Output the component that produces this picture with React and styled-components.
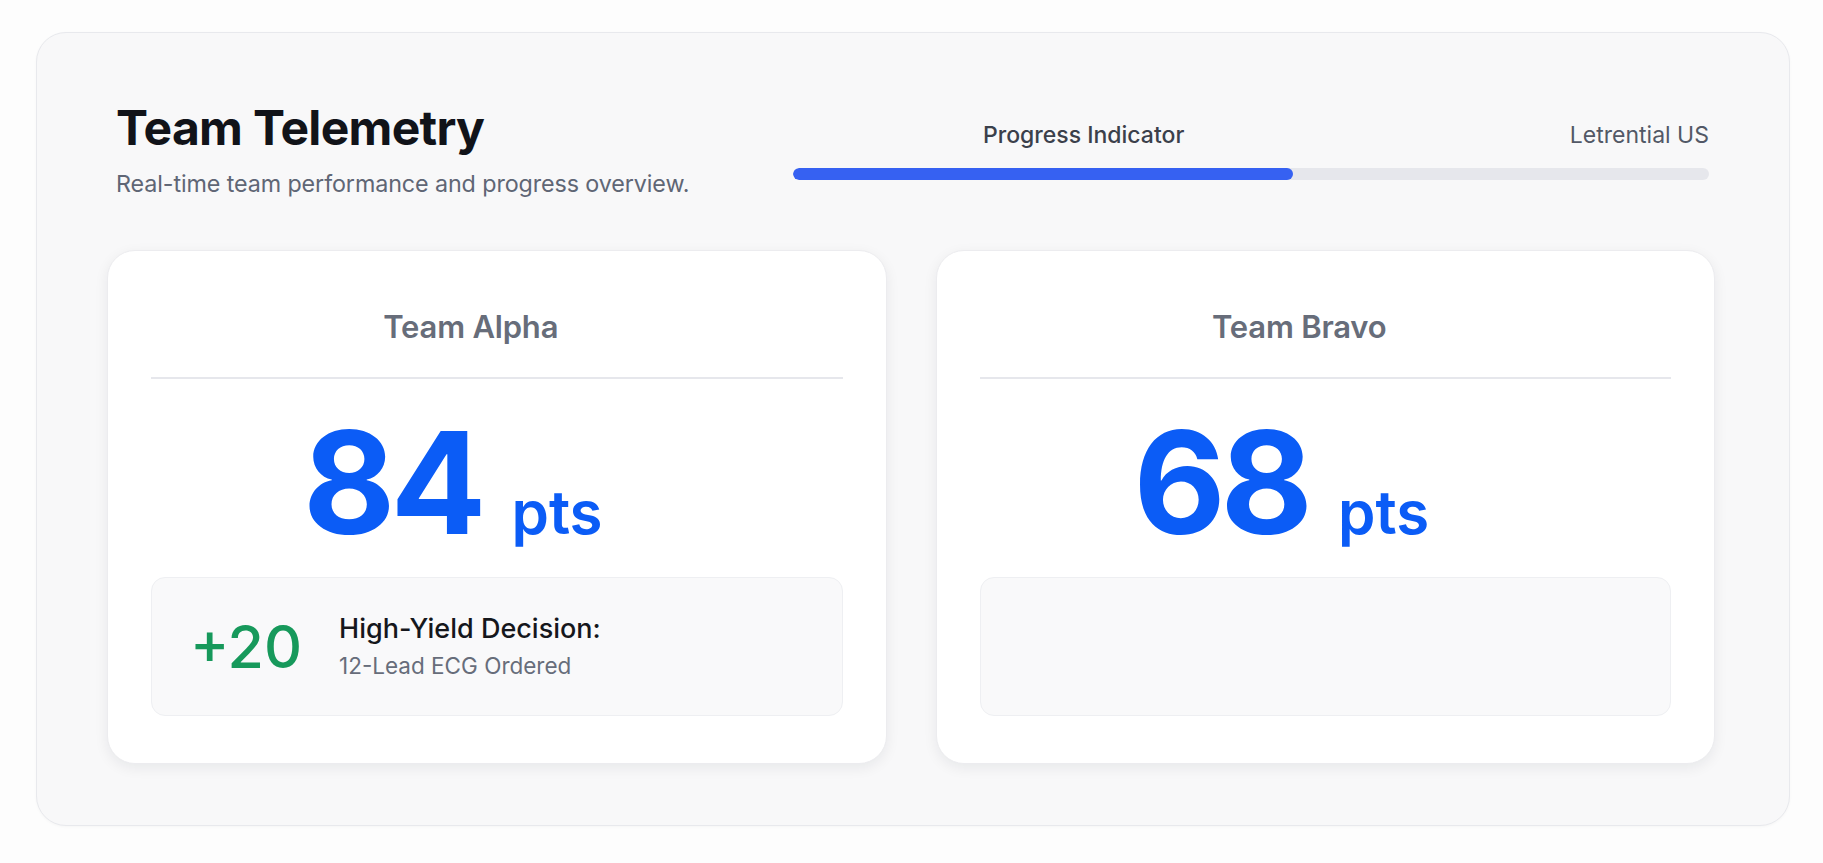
import React from 'react';
import styled, { createGlobalStyle } from 'styled-components';

const GlobalStyle = createGlobalStyle`
  * { box-sizing: border-box; }
  body {
    margin: 0;
    background: #fdfdfd;
    font-family: Inter, "Noto Sans", "Liberation Sans", sans-serif;
    color: #111827;
  }
`;

const Page = styled.div`
  padding: 32px 33px 38px 36px;
`;

const Panel = styled.section`
  background: #f8f8f9;
  border: 1px solid #e8e9ed;
  border-radius: 30px;
  padding: 66px 74px 61px 70px;
  box-shadow: 0 1px 3px rgba(17, 24, 39, 0.03);
`;

const Header = styled.header`
  display: flex;
  justify-content: space-between;
  align-items: flex-start;
  padding: 0 6px 0 9px;
  margin-bottom: 51px;
`;

const TitleBlock = styled.div`
  display: flex;
  flex-direction: column;
`;

const Title = styled.h1`
  margin: 0;
  font-size: 48px;
  line-height: 1.2;
  font-weight: 700;
  letter-spacing: -0.7px;
  color: #111319;
`;

const Subtitle = styled.p`
  margin: 12px 0 0;
  font-size: 23.3px;
  line-height: 1.3;
  letter-spacing: -0.1px;
  color: #5f6675;
`;

const Progress = styled.div`
  width: 916px;
  padding-top: 22px;
`;

const ProgressLabels = styled.div`
  display: flex;
  justify-content: space-between;
  padding-left: 190px;
  margin-bottom: 17px;
  font-size: 23px;
  line-height: 1.3;
`;

const Label = styled.span`
  color: ${p => (p.$strong ? '#3b404b' : '#525866')};
  font-weight: ${p => (p.$strong ? 500 : 400)};
`;

const Track = styled.div`
  height: 12px;
  border-radius: 6px;
  background: #e6e7ec;
  overflow: hidden;
`;

const Fill = styled.div`
  height: 100%;
  border-radius: 6px;
  background: #3661f2;
`;

const Cards = styled.div`
  display: grid;
  grid-template-columns: 1fr 1fr;
  gap: 49px;
`;

const Card = styled.article`
  background: #ffffff;
  border: 1px solid #ececef;
  border-radius: 28px;
  padding: 57px 43px 47px;
  box-shadow: 0 4px 14px rgba(17, 24, 39, 0.07);
`;

const TeamName = styled.h2`
  margin: 0;
  padding: 0 52px 32px 0;
  border-bottom: 2px solid #e6e7ec;
  text-align: center;
  font-size: 31px;
  line-height: 1.2;
  font-weight: 600;
  letter-spacing: -0.2px;
  color: #676d7a;
`;

const Score = styled.div`
  display: flex;
  justify-content: center;
  align-items: baseline;
  gap: 30px;
  margin: 32px 0 24px;
  padding-right: 88px;
  color: #0b5cf6;
`;

const Points = styled.span`
  font-size: 142px;
  line-height: 1;
  font-weight: 700;
  letter-spacing: -5px;
`;

const Unit = styled.span`
  font-size: 60px;
  line-height: 1;
  font-weight: 600;
`;

const Event = styled.div`
  display: flex;
  align-items: center;
  gap: 37px;
  height: 139px;
  padding: 0 38px;
  background: #f9f9fa;
  border: 1px solid #eeeff2;
  border-radius: 14px;
`;

const Delta = styled.span`
  font-size: 59px;
  line-height: 1;
  font-weight: 500;
  color: #17995b;
`;

const EventText = styled.div`
  display: flex;
  flex-direction: column;
  gap: 5px;
`;

const EventTitle = styled.span`
  font-size: 27px;
  line-height: 1.2;
  font-weight: 500;
  color: #15171c;
`;

const EventDetail = styled.span`
  font-size: 22.5px;
  line-height: 1.3;
  color: #676d7a;
`;

const teams = [
  { name: 'Team Alpha', points: 84, event: { delta: '+20', title: 'High-Yield Decision:', detail: '12-Lead ECG Ordered' } },
  { name: 'Team Bravo', points: 68, event: null },
];

export default function App() {
  const progress = 54.6;

  return (
    <>
      <GlobalStyle />
      <Page>
        <Panel>
          <Header>
            <TitleBlock>
              <Title>Team Telemetry</Title>
              <Subtitle>Real-time team performance and progress overview.</Subtitle>
            </TitleBlock>
            <Progress>
              <ProgressLabels>
                <Label $strong>Progress Indicator</Label>
                <Label>Letrential US</Label>
              </ProgressLabels>
              <Track>
                <Fill style={{ width: `${progress}%` }} />
              </Track>
            </Progress>
          </Header>

          <Cards>
            {teams.map(team => (
              <Card key={team.name}>
                <TeamName>{team.name}</TeamName>
                <Score>
                  <Points>{team.points}</Points>
                  <Unit>pts</Unit>
                </Score>
                <Event>
                  {team.event && (
                    <>
                      <Delta>{team.event.delta}</Delta>
                      <EventText>
                        <EventTitle>{team.event.title}</EventTitle>
                        <EventDetail>{team.event.detail}</EventDetail>
                      </EventText>
                    </>
                  )}
                </Event>
              </Card>
            ))}
          </Cards>
        </Panel>
      </Page>
    </>
  );
}
